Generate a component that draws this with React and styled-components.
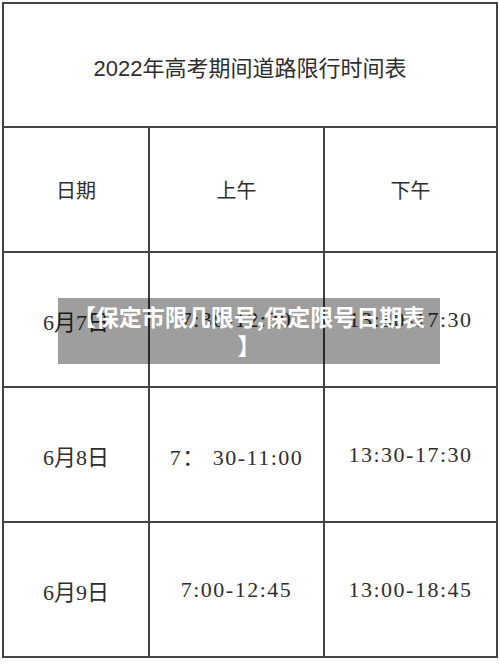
import React from 'react';
import styled, { createGlobalStyle } from 'styled-components';

const rows = [
  { date: '6月7日', am: '7:30-12:30', pm: '13:30-17:30' },
  { date: '6月8日', am: '7： 30-11:00', pm: '13:30-17:30' },
  { date: '6月9日', am: '7:00-12:45', pm: '13:00-18:45' },
];

export default function App() {
  return (
    <>
      <GlobalStyle />
      <Page>
        <Table>
          <TitleRow>2022年高考期间道路限行时间表</TitleRow>
          <Row $height={123}>
            <Cell $width={144}>日期</Cell>
            <Cell $width={173}>上午</Cell>
            <Cell $last>下午</Cell>
          </Row>
          {rows.map((r, i) => (
            <Row key={r.date} $height={133} $last={i === rows.length - 1}>
              <Cell $width={144} $serif>{r.date}</Cell>
              <Cell $width={173} $serif $spaced>{r.am}</Cell>
              <Cell $last $serif $spaced>{r.pm}</Cell>
            </Row>
          ))}
        </Table>
        <Caption>【保定市限几限号,保定限号日期表】</Caption>
      </Page>
    </>
  );
}

const GlobalStyle = createGlobalStyle`
  html, body {
    margin: 0;
    padding: 0;
    background: #fff;
  }
  * {
    box-sizing: border-box;
  }
`;

const Page = styled.div`
  position: relative;
  width: 500px;
  height: 664px;
  padding: 2px 0 0 2px;
  background: #fff;
  overflow: hidden;
`;

const Table = styled.div`
  width: 496px;
  border: 2px solid #444;
  display: flex;
  flex-direction: column;
  color: #2e2e2e;
`;

const TitleRow = styled.div`
  height: 124px;
  border-bottom: 2px solid #444;
  display: flex;
  align-items: center;
  justify-content: center;
  padding-top: 2px;
  font-family: "Liberation Sans", "Noto Sans CJK SC", sans-serif;
  font-size: 22px;
`;

const Row = styled.div`
  display: flex;
  height: ${p => p.$height + (p.$last ? 0 : 2)}px;
  border-bottom: ${p => (p.$last ? 'none' : '2px solid #444')};
`;

const Cell = styled.div`
  ${p => (p.$last ? 'flex: 1;' : `width: ${p.$width + 2}px; border-right: 2px solid #444;`)}
  display: flex;
  align-items: center;
  justify-content: center;
  white-space: pre;
  font-family: ${p => (p.$serif ? '"Liberation Serif", "Noto Sans CJK SC", serif' : '"Noto Sans CJK SC", sans-serif')};
  font-size: ${p => (p.$serif ? 22 : 20)}px;
  letter-spacing: ${p => (p.$spaced ? 1.5 : 0)}px;
`;

const Caption = styled.div`
  position: absolute;
  left: 58px;
  top: 298px;
  width: 382px;
  height: 66px;
  padding: 4px 14px;
  background: rgba(0, 0, 0, 0.38);
  color: #fff;
  font-family: "Noto Sans CJK SC", sans-serif;
  font-weight: 700;
  font-size: 23px;
  line-height: 29px;
  text-align: center;
  line-break: anywhere;
`;
